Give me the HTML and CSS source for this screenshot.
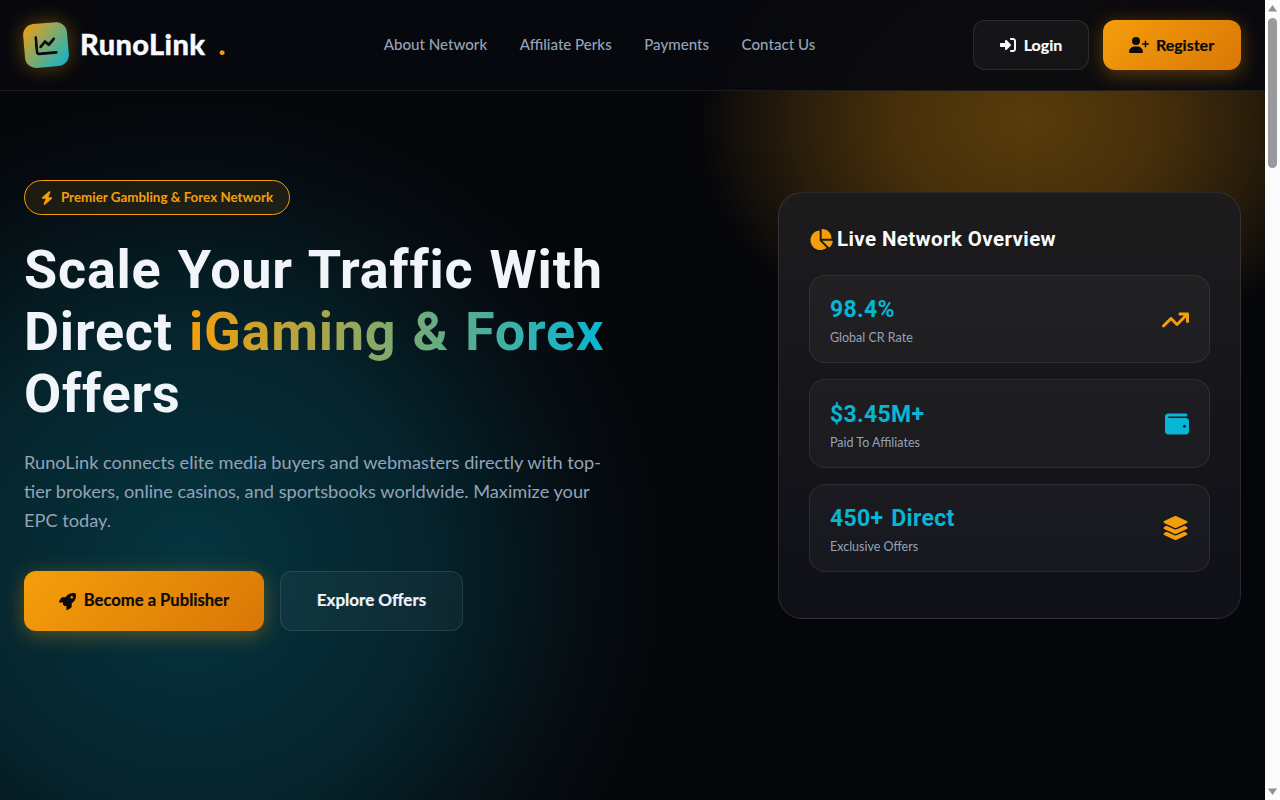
FILE: index.html
```html
<!DOCTYPE html>
<html lang="en">
<head>
<meta charset="utf-8">
<title>RunoLink</title>
<link rel="stylesheet" href="styles.css">
</head>
<body>
<div class="shell">
<div class="page">
<header class="nav">
  <a class="brand" href="#">
    <span class="logo"><svg class="logo-icon" viewBox="0 0 512 512"><path d="M64 64c0-17.700-14.300-32-32-32S0 46.300 0 64V400c0 44.200 35.800 80 80 80H480c17.700 0 32-14.300 32-32s-14.300-32-32-32H80c-8.800 0-16-7.200-16-16V64zm406.600 86.600c12.500-12.500 12.500-32.800 0-45.300s-32.800-12.500-45.300 0L320 210.700l-57.400-57.400c-12.500-12.500-32.800-12.500-45.300 0l-112 112c-12.500 12.500-12.500 32.800 0 45.300s32.800 12.500 45.300 0L240 221.300l57.400 57.400c12.500 12.500 32.800 12.500 45.300 0l128-128z"/></svg></span>
    <span class="brand-name">RunoLink</span><span class="brand-dot">.</span>
  </a>
  <nav class="links">
    <a href="#">About Network</a>
    <a href="#">Affiliate Perks</a>
    <a href="#">Payments</a>
    <a href="#">Contact Us</a>
  </nav>
  <div class="actions">
    <a class="btn btn-login" href="#"><svg class="ic-login" viewBox="0 0 512 512"><path d="M217.900 105.900L340.700 228.700c7.200 7.200 11.300 17.100 11.300 27.300s-4.100 20.100-11.300 27.300L217.900 406.100c-6.400 6.400-15 9.900-24 9.900c-18.700 0-33.900-15.200-33.900-33.900l0-62.100L32 320c-17.700 0-32-14.300-32-32l0-64c0-17.700 14.300-32 32-32l128 0 0-62.100c0-18.700 15.200-33.900 33.900-33.900c9 0 17.600 3.600 24 9.900zM352 416l64 0c17.700 0 32-14.300 32-32l0-256c0-17.700-14.300-32-32-32l-64 0c-17.700 0-32-14.300-32-32s14.300-32 32-32l64 0c53 0 96 43 96 96l0 256c0 53-43 96-96 96l-64 0c-17.700 0-32-14.300-32-32s14.300-32 32-32z"/></svg><span>Login</span></a>
    <a class="btn btn-register" href="#"><svg class="ic-reg" viewBox="0 0 640 512"><path d="M96 128a128 128 0 1 1 256 0A128 128 0 1 1 96 128zM0 482.300C0 383.800 79.800 304 178.300 304h91.400C368.200 304 448 383.800 448 482.300c0 16.400-13.300 29.700-29.700 29.700H29.700C13.300 512 0 498.700 0 482.300zM504 312V248H440c-13.300 0-24-10.700-24-24s10.700-24 24-24h64V136c0-13.300 10.700-24 24-24s24 10.700 24 24v64h64c13.300 0 24 10.700 24 24s-10.700 24-24 24H552v64c0 13.300-10.700 24-24 24s-24-10.700-24-24z"/></svg><span>Register</span></a>
  </div>
</header>
<main class="hero">
  <section class="intro">
    <div class="badge"><svg class="ic-bolt" viewBox="0 0 448 512"><path d="M349.400 44.600c5.900-13.700 1.500-29.700-10.600-38.500s-28.600-8-39.900 1.800l-256 224c-10 8.800-13.600 22.900-8.900 35.300S50.700 288 64 288H175.500L98.600 467.400c-5.900 13.700-1.500 29.700 10.600 38.500s28.600 8 39.900-1.800l256-224c10-8.800 13.600-22.900 8.900-35.300s-16.600-20.700-30-20.700H272.500L349.400 44.600z"/></svg><span>Premier Gambling &amp; Forex Network</span></div>
    <h1>Scale Your Traffic With<br>Direct <span class="grad">iGaming &amp; Forex</span><br>Offers</h1>
    <p class="lead">RunoLink connects elite media buyers and webmasters directly with top-tier brokers, online casinos, and sportsbooks worldwide. Maximize your EPC today.</p>
    <div class="cta">
      <a class="btn btn-primary" href="#"><svg class="ic-rocket" viewBox="0 0 512 512"><path d="M156.600 384.900L125.700 354c-8.500-8.500-11.500-20.800-7.700-32.200c3-8.900 7-20.500 11.800-33.800L24 288c-8.600 0-16.600-4.600-20.900-12.100s-4.200-16.700 .2-24.100l52.500-88.500c13-21.900 36.500-35.300 61.900-35.300l82.300 0c2.400-4 4.800-7.700 7.200-11.300C289.100-4.100 411.100-8.100 483.900 5.300c11.600 2.100 20.600 11.200 22.800 22.800c13.400 72.900 9.300 194.800-111.400 276.700c-3.500 2.400-7.300 4.800-11.300 7.200v82.300c0 25.400-13.400 49-35.300 61.900l-88.500 52.500c-7.400 4.400-16.600 4.500-24.100 .2s-12.100-12.200-12.100-20.900V380.800c-14.100 4.900-26.400 8.900-35.700 11.900c-11.200 3.600-23.400 .5-31.800-7.800zM384 168a40 40 0 1 0 0-80 40 40 0 1 0 0 80z"/></svg><span>Become a Publisher</span></a>
      <a class="btn btn-ghost" href="#"><span>Explore Offers</span></a>
    </div>
  </section>
  <aside class="card">
    <h2><svg class="ic-pie" viewBox="0 0 576 512"><path d="M304 240V16.600c0-9 7-16.600 16-16.600C443.700 0 544 100.300 544 224c0 9-7.600 16-16.600 16H304zM32 272C32 150.700 122.100 50.300 239 34.300c9.200-1.300 17 6.100 17 15.400V288L412.500 444.500c6.700 6.700 6.200 17.700-1.500 23.100C371.800 495.600 323.800 512 272 512C139.500 512 32 404.600 32 272zm526.400 16c9.300 0 16.600 7.800 15.400 17c-7.700 55.900-34.600 105.600-73.900 142.300c-6 5.600-15.400 5.200-21.200-.7L320 288H558.400z"/></svg>Live Network Overview</h2>
    <div class="stats">
      <div class="stat">
        <div><div class="value">98.4%</div><div class="label">Global CR Rate</div></div>
        <svg class="ic-stat amber" viewBox="0 0 576 512"><path d="M384 160c-17.700 0-32-14.300-32-32s14.300-32 32-32H544c17.700 0 32 14.300 32 32V288c0 17.700-14.300 32-32 32s-32-14.300-32-32V205.300L342.600 374.600c-12.500 12.500-32.800 12.500-45.300 0L192 269.300 54.600 406.600c-12.500 12.500-32.800 12.500-45.300 0s-12.500-32.800 0-45.300l160-160c12.500-12.500 32.800-12.500 45.300 0L320 306.700 466.700 160H384z"/></svg>
      </div>
      <div class="stat">
        <div><div class="value">$3.45M+</div><div class="label">Paid To Affiliates</div></div>
        <svg class="ic-stat ic-square cyan" viewBox="0 0 512 512"><path d="M64 32C28.700 32 0 60.700 0 96V416c0 35.300 28.700 64 64 64H448c35.300 0 64-28.700 64-64V192c0-35.300-28.700-64-64-64H80c-8.800 0-16-7.200-16-16s7.200-16 16-16H448c17.700 0 32-14.300 32-32s-14.300-32-32-32H64zM416 272a32 32 0 1 1 0 64 32 32 0 1 1 0-64z"/></svg>
      </div>
      <div class="stat">
        <div><div class="value">450+ Direct</div><div class="label">Exclusive Offers</div></div>
        <svg class="ic-stat amber" viewBox="0 0 576 512"><path d="M264.500 5.200c14.900-6.900 32.100-6.900 47 0l218.600 101c8.500 3.900 13.900 12.400 13.900 21.800s-5.400 17.900-13.900 21.800l-218.600 101c-14.900 6.900-32.100 6.900-47 0L45.900 149.800C37.400 145.800 32 137.300 32 128s5.400-17.900 13.900-21.800L264.500 5.200zM476.900 209.600l53.200 24.600c8.500 3.900 13.900 12.400 13.900 21.800s-5.400 17.900-13.900 21.800l-218.600 101c-14.900 6.900-32.100 6.900-47 0L45.900 277.800C37.400 273.800 32 265.300 32 256s5.400-17.900 13.900-21.800l53.200-24.600 152 70.200c23.400 10.800 50.400 10.800 73.800 0l152-70.200zm-152 198.200l152-70.200 53.200 24.600c8.500 3.900 13.900 12.400 13.900 21.800s-5.400 17.900-13.900 21.800l-218.600 101c-14.900 6.900-32.100 6.900-47 0L45.900 405.800C37.400 401.800 32 393.300 32 384s5.400-17.900 13.900-21.800l53.200-24.600 152 70.200c23.400 10.800 50.400 10.800 73.800 0z"/></svg>
      </div>
    </div>
  </aside>
</main>
</div>
<div class="scrollbar">
  <svg class="sb-arrow" viewBox="0 0 15 17"><path d="M7.500 5L12 11.500H3z"/></svg>
  <div class="sb-thumb"></div>
  <div class="sb-fill"></div>
  <svg class="sb-arrow" viewBox="0 0 15 17"><path d="M3 5.500H12L7.500 12z"/></svg>
</div>
</div>
</body>
</html>
```
FILE: styles.css
```css
* { box-sizing: border-box; }
html, body { height: 100%; overflow: hidden; }
body { margin: 0; font-family: Lato, "Noto Sans", sans-serif; color: #f1f5f9; background: #05060a; }
a { text-decoration: none; color: inherit; }
svg { fill: currentColor; display: block; flex: none; }
.shell { display: flex; height: 800px; }
.page {
  flex: 1;
  min-width: 0;
  background:
    radial-gradient(ellipse 330px 250px at 1025px 120px, rgba(245,158,11,.35), rgba(245,158,11,.27) 40%, rgba(245,158,11,.15) 70%, rgba(245,158,11,0) 100%),
    radial-gradient(circle 480px at 190px 570px, rgba(6,182,212,.27), rgba(6,182,212,.17) 50%, rgba(6,182,212,.05) 80%, rgba(6,182,212,0) 100%),
    #05060a;
}
.scrollbar {
  width: 15px;
  display: flex; flex-direction: column; align-items: center;
  background: #fbfbfb;
  color: #8f8f92;
}
.sb-arrow { width: 15px; height: 17px; }
.sb-thumb { width: 9px; height: 150px; margin-top: 1px; border-radius: 5px; background: #9a9a9d; }
.sb-fill { flex: 1; }
.nav {
  height: 91px;
  display: flex;
  align-items: center;
  justify-content: space-between;
  padding: 0 24px;
  background: rgba(8,9,14,.93);
  border-bottom: 1px solid rgba(255,255,255,.08);
}
.brand { display: flex; align-items: center; width: 230px; }
.logo {
  width: 44px; height: 44px; border-radius: 11px;
  display: flex; align-items: center; justify-content: center;
  background: linear-gradient(135deg, #f59e0b, #06b6d4);
  transform: rotate(-5deg);
  box-shadow: 0 0 20px rgba(245,158,11,.4);
  color: #0a0a0f;
}
.logo-icon { width: 22px; height: 22px; }
.brand-name { margin-left: 12px; padding-bottom: 3px; font-size: 29px; font-weight: 900; letter-spacing: .4px; color: #f8fafc; -webkit-text-stroke: .3px #f8fafc; }
.brand-dot { margin-left: 13px; padding-bottom: 3px; font-size: 29px; font-weight: 900; color: #f59e0b; }
.links { display: flex; gap: 32.500px; font-size: 15.100px; font-weight: 500; color: #94a3b8; margin-left: -28px; padding-bottom: 2px; }
.actions { display: flex; gap: 14px; }
.btn {
  display: flex; align-items: center; justify-content: center;
  border-radius: 12px; font-weight: 700;
}
.btn span { padding-bottom: 2px; -webkit-text-stroke: .2px currentColor; }
.btn-login {
  width: 116px; height: 50px; gap: 8px; font-size: 16px;
  background: rgba(255,255,255,.04);
  border: 1px solid rgba(255,255,255,.1);
  color: #f8fafc;
}
.ic-login { width: 16px; height: 16px; }
.btn-register {
  width: 138px; height: 50px; gap: 7px; padding-right: 1px; font-size: 16px; color: #0a0a0f;
  background: linear-gradient(135deg, #f59e0b, #d97706);
  box-shadow: 0 4px 20px rgba(245,158,11,.35);
}
.ic-reg { width: 20px; height: 16px; }
.hero {
  display: grid;
  grid-template-columns: 1fr 463px;
  align-items: center;
  padding: 89px 24px 0;
}
.badge {
  width: 266px; height: 35px;
  display: flex; align-items: center; justify-content: center; gap: 8px;
  border: 1px solid #f59e0b; border-radius: 18px;
  background: rgba(245,158,11,.1);
  color: #f59e0b; font-size: 13.400px; font-weight: 700;
}
.badge span { padding-bottom: 2px; }
.ic-bolt { width: 12px; height: 14px; }
h1 {
  margin: 24px 0 23px;
  font: 700 54px/62px Roboto, sans-serif;
  letter-spacing: .75px;
  word-spacing: 2px;
  color: #f1f5f9;
}
.grad {
  background: linear-gradient(90deg, #f59e0b, #06b6d4);
  -webkit-background-clip: text; background-clip: text;
  color: transparent;
}
.lead { margin: 0 0 36px; max-width: 590px; font-size: 18.200px; line-height: 29px; color: #94a3b8; }
.cta { display: flex; gap: 16px; }
.btn-primary {
  width: 240px; height: 60px; gap: 8px; font-size: 16.600px; color: #0a0a0f;
  background: linear-gradient(135deg, #f59e0b, #d97706);
  box-shadow: 0 4px 20px rgba(245,158,11,.35);
}
.ic-rocket { width: 17px; height: 17px; }
.btn-ghost {
  width: 183px; height: 60px; font-size: 17px; color: #f1f5f9;
  background: rgba(255,255,255,.04);
  border: 1px solid rgba(255,255,255,.1);
}
.btn-ghost span { padding-bottom: 3px; }
.card {
  height: 427px;
  padding: 30px;
  border: 1px solid rgba(255,255,255,.1);
  border-radius: 24px;
  background: linear-gradient(#1d1b1c, #0f1018);
}
h2 {
  display: flex; align-items: center; gap: 4px;
  margin: 0 0 20px; height: 32px;
  font: 700 20.500px Roboto, sans-serif;
  letter-spacing: .4px;
  color: #f8fafc;
}
.ic-pie { width: 24px; height: 21px; color: #f59e0b; }
.stats { display: flex; flex-direction: column; gap: 16px; }
.stat {
  height: 88.400px; padding: 1px 20px 0;
  display: flex; align-items: center; justify-content: space-between;
  border: 1px solid rgba(255,255,255,.08);
  border-radius: 16px;
  background: rgba(255,255,255,.03);
}
.value { font: 700 23px/34px Roboto, sans-serif; color: #06b6d4; letter-spacing: .3px; word-spacing: 2px; }
.label { margin-top: 3px; font-size: 12.500px; line-height: 16px; color: #94a3b8; }
.ic-stat { width: 27px; height: 24px; }
.ic-square { width: 24px; }
.amber { color: #f59e0b; }
.cyan { color: #06b6d4; }
```
